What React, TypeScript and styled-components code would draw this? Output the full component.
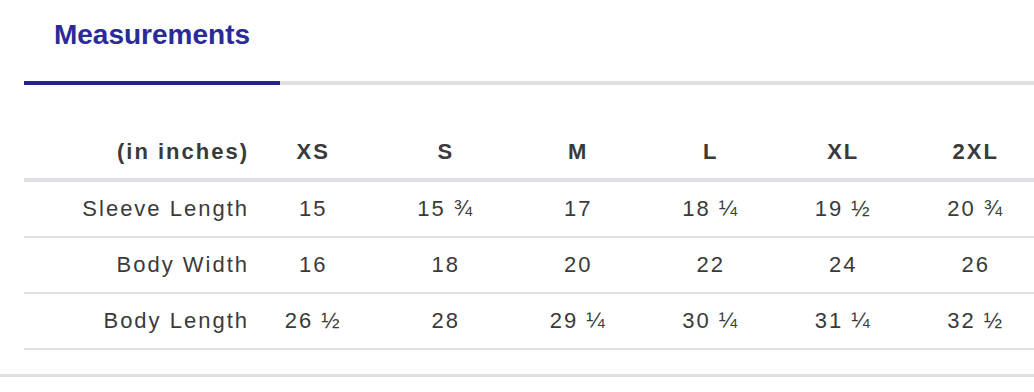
import React from "react";
import styled, { createGlobalStyle } from "styled-components";

const Global = createGlobalStyle`
  html, body { margin: 0; padding: 0; background: #fff; overflow: hidden; }
  body { font-family: "Liberation Sans", Arial, sans-serif; }
`;

const Section = styled.section`
  width: 1034px;
  padding-bottom: 24px;
  border-bottom: 3px solid #e0e0e4;
`;

const TabList = styled.div`
  display: flex;
  margin-left: 24px;
  border-bottom: 4px solid #e0e0e4;
`;

const Tab = styled.div<{ $active?: boolean }>`
  width: 256px;
  box-sizing: border-box;
  text-align: center;
  padding: 19px 0 30px;
  margin-bottom: -4px;
  font-size: 28px;
  line-height: 32px;
  font-weight: 700;
  color: #2a2a9a;
  border-bottom: 4px solid ${(p) => (p.$active ? "#24238f" : "transparent")};
`;

const Table = styled.div`
  margin: 41px 0 0 24px;
  width: 1018px;
  display: grid;
  grid-template-columns: 223px repeat(6, 1fr);
  color: #3a3a3a;
  font-size: 22px;
  letter-spacing: 2px;
`;

const Row = styled.div<{ $head?: boolean }>`
  display: contents;
  & > * {
    height: ${(p) => (p.$head ? "52px" : "54px")};
    border-bottom: ${(p) => (p.$head ? "4px" : "2px")} solid #e0e0e4;
    font-weight: ${(p) => (p.$head ? 700 : 400)};
  }
`;

const Cell = styled.div<{ $label?: boolean }>`
  display: flex;
  align-items: center;
  justify-content: ${(p) => (p.$label ? "flex-end" : "center")};
  white-space: nowrap;
  margin-right: ${(p) => (p.$label ? "-2px" : "0")};
`;

const sizes = ["XS", "S", "M", "L", "XL", "2XL"];
const rows: [string, string[]][] = [
  ["Sleeve Length", ["15", "15 ¾", "17", "18 ¼", "19 ½", "20 ¾"]],
  ["Body Width", ["16", "18", "20", "22", "24", "26"]],
  ["Body Length", ["26 ½", "28", "29 ¼", "30 ¼", "31 ¼", "32 ½"]],
];

export default function App() {
  return (
    <>
      <Global />
      <Section>
        <TabList>
          <Tab $active>Measurements</Tab>
        </TabList>
        <Table>
          <Row $head>
            <Cell $label>(in inches)</Cell>
            {sizes.map((s) => (
              <Cell key={s}>{s}</Cell>
            ))}
          </Row>
          {rows.map(([label, vals]) => (
            <Row key={label}>
              <Cell $label>{label}</Cell>
              {vals.map((v, i) => (
                <Cell key={i}>{v}</Cell>
              ))}
            </Row>
          ))}
        </Table>
      </Section>
    </>
  );
}
